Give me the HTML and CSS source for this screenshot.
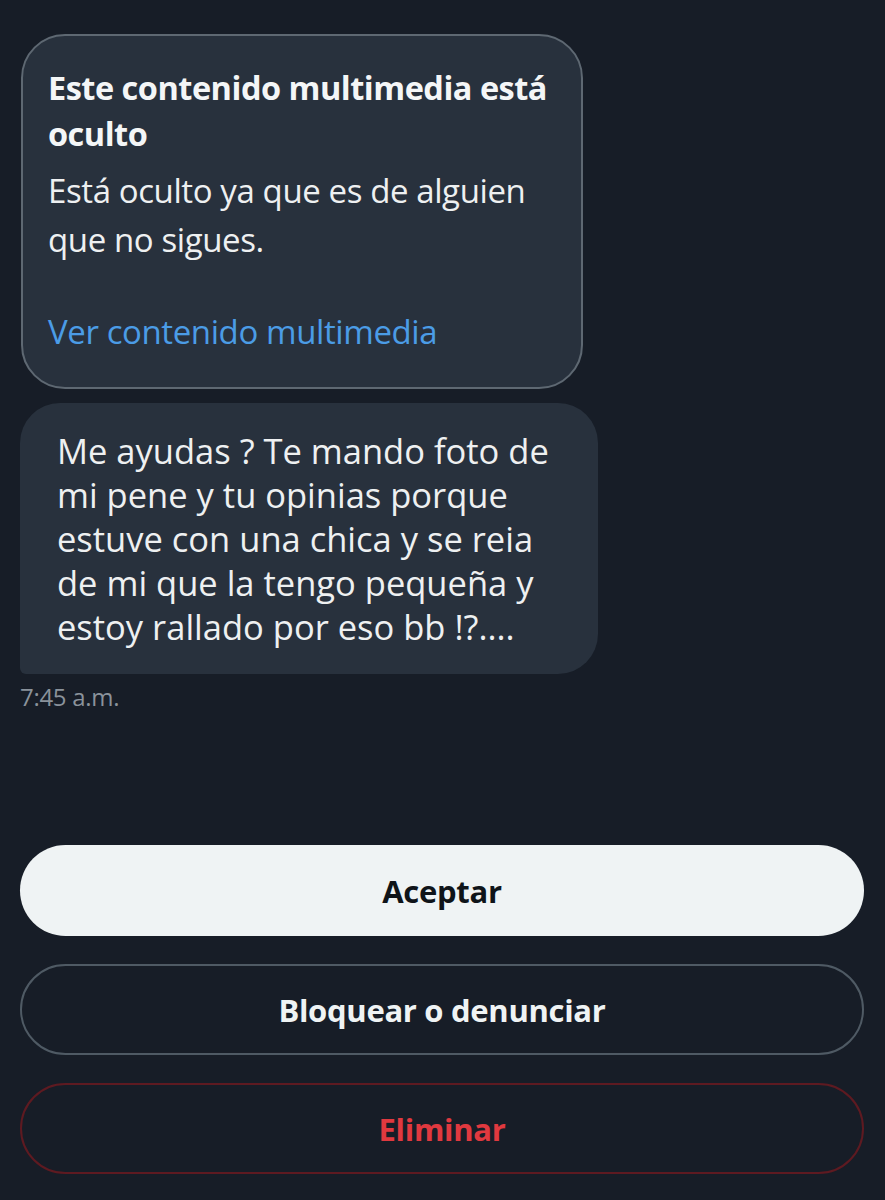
FILE: index.html
```html
<!DOCTYPE html>
<html lang="es">
<head>
<meta charset="utf-8">
<link rel="stylesheet" href="styles.css">
</head>
<body>
<main class="screen">
  <section class="thread">
    <div class="hidden-card">
      <p class="hidden-title">Este contenido multimedia está oculto</p>
      <p class="hidden-body">Está oculto ya que es de alguien que no sigues.</p>
      <p class="hidden-link">Ver contenido multimedia</p>
    </div>
    <div class="bubble">
      <p class="bubble-text">Me ayudas ? Te mando foto de mi pene y tu opinias porque estuve con una chica y se reia de mi que la tengo pequeña y estoy rallado por eso bb !?....</p>
    </div>
    <div class="time">7:45 a.m.</div>
  </section>
  <section class="actions">
    <button class="btn btn-primary">Aceptar</button>
    <button class="btn btn-outline">Bloquear o denunciar</button>
    <button class="btn btn-danger">Eliminar</button>
  </section>
</main>
</body>
</html>
```

FILE: styles.css
```css
* { box-sizing: border-box; }
html, body {
  margin: 0;
  padding: 0;
  background: #171d27;
}
body {
  font-family: "Open Sans", "Noto Sans", sans-serif;
  color: #e7e9ea;
  width: 885px;
  height: 1200px;
  overflow: hidden;
}
.screen {
  padding: 34px 21px 0 20px;
  display: flex;
  flex-direction: column;
}
.thread {
  display: flex;
  flex-direction: column;
  align-items: flex-start;
}
.hidden-card {
  width: 562px;
  margin-left: 1px;
  background: #28313d;
  border: 2px solid #5e6872;
  border-radius: 44px;
  padding: 29px 14px 31px 25px;
}
.hidden-card p { margin: 0; }
.hidden-title {
  font-weight: 700;
  font-size: 32.5px;
  line-height: 46px;
  color: #f4f6f7;
  letter-spacing: -0.5px;
}
.hidden-body {
  font-size: 33px;
  line-height: 49px;
  color: #eef0f1;
  margin-top: 9px !important;
  letter-spacing: -0.4px;
}
.hidden-link {
  font-size: 33px;
  line-height: 49px;
  color: #4b9ce6;
  margin-top: 43px !important;
  letter-spacing: -0.4px;
}
.bubble {
  margin-top: 14px;
  width: 578px;
  background: #28313d;
  border-radius: 40px 40px 40px 6px;
  padding: 26px 24px 25px 37px;
}
.bubble-text {
  margin: 0;
  font-size: 34.5px;
  line-height: 44px;
  color: #eef0f1;
  letter-spacing: 0;
}
.time {
  margin-top: 8px;
  font-size: 24px;
  line-height: 30px;
  color: #8a929b;
  letter-spacing: -0.3px;
}
.actions {
  margin-top: 133px;
  display: flex;
  flex-direction: column;
  gap: 28px;
}
.btn {
  height: 91px;
  width: 844px;
  border-radius: 46px;
  font-family: "Open Sans", "Noto Sans", sans-serif;
  font-size: 31px;
  font-weight: 700;
  letter-spacing: -0.3px;
  display: flex;
  align-items: center;
  justify-content: center;
  padding: 0;
}
.btn-primary {
  background: #eff3f4;
  color: #0f1419;
  border: none;
}
.btn-outline {
  background: transparent;
  color: #eff3f4;
  border: 2px solid #4f5a64;
}
.btn-danger {
  background: transparent;
  color: #e0393f;
  border: 2px solid #5e1a21;
}
```
